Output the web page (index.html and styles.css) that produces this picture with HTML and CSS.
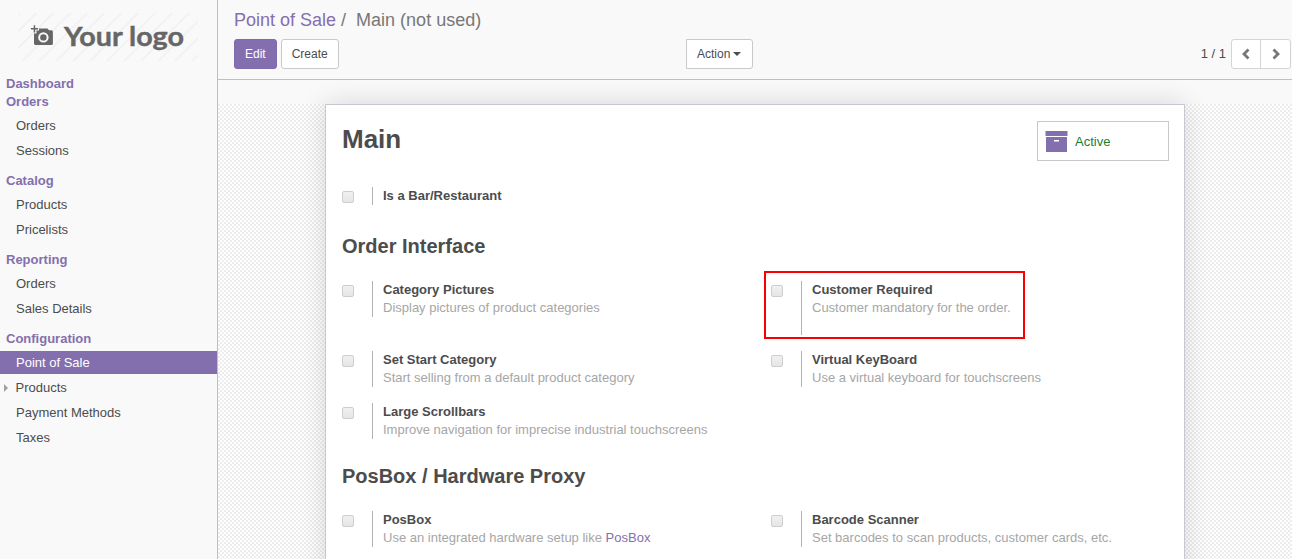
FILE: index.html
```html
<!DOCTYPE html>
<html lang="en">
<head>
<meta charset="utf-8">
<title>Point of Sale</title>
<link rel="stylesheet" href="styles.css">
</head>
<body>
<div class="app">
  <aside class="sidebar">
    <svg class="logo" width="180" height="48" viewBox="0 0 180 48">
      <defs>
        <pattern id="stripes" width="12" height="12" patternUnits="userSpaceOnUse" patternTransform="rotate(45)">
          <rect width="2" height="12" fill="#f2f2f2"/>
        </pattern>
      </defs>
      <rect width="180" height="48" fill="url(#stripes)"/>
      <g fill="#666">
        <path d="M15.700 12.300h1.500v2.800h2.800v1.500h-2.800v2.800h-1.500v-2.800h-2.800v-1.500h2.800z"/>
        <path d="M21 17.500V15.500h8.500l1.500 1.800h2.400a1.500 1.500 0 0 1 1.500 1.500V30.500a1.500 1.500 0 0 1-1.500 1.500h-16A1.500 1.500 0 0 1 16 30.500V20.600h2.500v-3.100z"/>
        <circle cx="25.400" cy="24.400" r="5.200" fill="#f9f9f9"/>
        <circle cx="25.400" cy="24.400" r="3.200"/>
      </g>
      <text class="logo-text" x="46" y="33" textLength="120" lengthAdjust="spacingAndGlyphs">Your logo</text>
    </svg>
    <nav class="menu">
      <div class="menu-title">Dashboard</div>
      <div class="menu-title">Orders</div>
      <ul class="menu-list"><li>Orders</li><li>Sessions</li></ul>
      <div class="menu-title">Catalog</div>
      <ul class="menu-list"><li>Products</li><li>Pricelists</li></ul>
      <div class="menu-title">Reporting</div>
      <ul class="menu-list"><li>Orders</li><li>Sales Details</li></ul>
      <div class="menu-title">Configuration</div>
      <ul class="menu-list"><li class="selected">Point of Sale</li><li class="expandable">Products</li><li>Payment Methods</li><li>Taxes</li></ul>
    </nav>
  </aside>
  <div class="main">
    <header class="control-panel">
      <div class="breadcrumb"><a>Point of Sale</a><span class="slash">/</span><span>Main (not used)</span></div>
      <div class="toolbar">
        <div class="buttons"><button class="btn primary">Edit</button><button class="btn">Create</button></div>
        <button class="btn action">Action<i class="caret"></i></button>
        <div class="pager">
          <span>1 / 1</span>
          <div class="pager-buttons">
            <button><svg width="10" height="12" viewBox="0 0 10 12"><path d="M7.500 1.500L3 6l4.500 4.500"/></svg></button>
            <button><svg width="10" height="12" viewBox="0 0 10 12"><path d="M2.500 1.500L7 6l-4.500 4.500"/></svg></button>
          </div>
        </div>
      </div>
    </header>
    <div class="content">
      <div class="backdrop">
        <section class="sheet">
          <div class="sheet-head">
            <h1>Main</h1>
            <div class="stat">
              <svg width="23" height="21" viewBox="0 0 23 21"><path fill="#846fae" fill-rule="evenodd" d="M.5 0h22v5H.5zM1 6h21v15H1zM9 9v1.500h5V9z"/></svg>
              <span>Active</span>
            </div>
          </div>
          <div class="settings">
            <div class="setting"><i class="check"></i><div class="info"><b>Is a Bar/Restaurant</b></div></div>
          </div>
          <h2>Order Interface</h2>
          <div class="settings">
            <div class="setting"><i class="check"></i><div class="info"><b>Category Pictures</b><p>Display pictures of product categories</p></div></div>
            <div class="setting highlighted"><i class="check"></i><div class="info tall"><b>Customer Required</b><p>Customer mandatory for the order.</p></div></div>
            <div class="setting"><i class="check"></i><div class="info"><b>Set Start Category</b><p>Start selling from a default product category</p></div></div>
            <div class="setting"><i class="check"></i><div class="info"><b>Virtual KeyBoard</b><p>Use a virtual keyboard for touchscreens</p></div></div>
            <div class="setting"><i class="check"></i><div class="info"><b>Large Scrollbars</b><p>Improve navigation for imprecise industrial touchscreens</p></div></div>
          </div>
          <h2 class="compact">PosBox / Hardware Proxy</h2>
          <div class="settings">
            <div class="setting"><i class="check"></i><div class="info"><b>PosBox</b><p>Use an integrated hardware setup like <a>PosBox</a></p></div></div>
            <div class="setting"><i class="check"></i><div class="info"><b>Barcode Scanner</b><p>Set barcodes to scan products, customer cards, etc.</p></div></div>
          </div>
        </section>
      </div>
    </div>
  </div>
</div>
</body>
</html>
```
FILE: styles.css
```css
*, *::before, *::after { box-sizing: border-box; }
body { margin: 0; background: #f9f9f9; color: #4c4c4c; font: 13px/18px "Liberation Sans", Arial, sans-serif; }
h1, h2, p, ul { margin: 0; padding: 0; }
a { color: #846fae; }
.app { display: flex; height: 559px; overflow: hidden; }
.sidebar { width: 218px; flex: none; border-right: 1px solid #bfbfbf; padding-top: 13px; }
.logo { display: block; margin-left: 18px; }
.logo-text { font: 700 26px Lato, sans-serif; fill: #666; stroke: #666; stroke-width: .4px; }
.menu { padding-top: 14px; }
.menu-title { padding-left: 6px; font-weight: bold; color: #846fae; }
.menu-list { list-style: none; margin: 3px 0 10px; display: flex; flex-direction: column; gap: 2px; }
.menu-list li { height: 23px; line-height: 23px; padding-left: 16px; }
.menu-list .selected { background: #846fae; color: #fff; }
.menu-list .expandable { display: flex; align-items: center; padding-left: 4px; }
.expandable::before { content: ""; margin-right: 7.5px; border: solid transparent; border-width: 4px 0 4px 4px; border-left-color: #a0a0a0; }

.main { flex: 1; display: flex; flex-direction: column; min-width: 0; }
.control-panel { height: 80px; flex: none; border-bottom: 1px solid #bfbfbf; padding: 10px 1px 0 16px; }
.breadcrumb { height: 29px; font-size: 18px; line-height: 21px; color: #777; }
.slash { margin: 0 10px 0 5px; }
.toolbar { display: grid; grid-template-columns: 452px 1fr auto; align-items: start; }
.buttons { display: flex; gap: 4px; }
.btn { height: 30px; padding: 0 10px; border: 1px solid #c9c9c9; border-radius: 3px; background: #fff; color: #4c4c4c; font: 12px/18px "Liberation Sans", Arial, sans-serif; white-space: nowrap; }
.btn.primary { background: #846fae; border-color: #7c6bad; color: #fff; }
.action { justify-self: start; padding-right: 11px; border-radius: 0 3px 3px 0; display: flex; align-items: center; }
.caret { margin-left: 3px; border: solid transparent; border-width: 4px 4px 0; border-top-color: #4c4c4c; }
.pager { display: flex; align-items: center; gap: 5px; }
.pager-buttons { display: flex; border: 1px solid #d5d5d5; border-radius: 3px; background: #fff; }
.pager-buttons button { width: 28px; height: 28px; padding: 0; border: 0; background: none; display: flex; align-items: center; justify-content: center; }
.pager-buttons button + button { width: 30px; border-left: 1px solid #d5d5d5; }
.pager-buttons path { fill: none; stroke: #777; stroke-width: 2.8; }

.content { flex: 1; padding-top: 24px; overflow: hidden; }
.backdrop { background: repeating-conic-gradient(#fff 0 25%, #ededed 0 50%) 0 0 / 4px 4px; padding: 0 107px; }
.sheet { height: 700px; background: #fff; border: 1px solid #c8c8d3; box-shadow: 0 0 26px rgba(0,0,0,.14); padding: 16px 15px 0 16px; }
.sheet-head { display: flex; justify-content: space-between; height: 66px; }
h1 { font-size: 26px; line-height: 36px; }
.stat { width: 132px; height: 40px; border: 1px solid #c9c9c9; display: flex; align-items: center; padding-left: 7px; gap: 7px; color: #198030; }
.stat span { padding-top: 2px; }
.settings { display: grid; grid-template-columns: 429px 1fr; row-gap: 16px; align-items: start; }
.setting { display: flex; position: relative; }
.check { width: 12px; height: 12px; margin: 4px 18px 0 0; border: 1px solid #cecece; border-radius: 2px; background: linear-gradient(#f0f0f0, #e6e6e6); }
.info { border-left: 1px solid #b3b3b3; padding-left: 10px; }
.info b { display: block; }
.info p { color: #a6a6a6; white-space: nowrap; }
.tall { height: 54px; }
.highlighted::after { content: ""; position: absolute; left: -7px; top: -10px; width: 261px; height: 68px; border: 2px solid #f80000; }
h2 { font-size: 20px; line-height: 24px; padding: 29px 0 23px; }
h2.compact { padding-top: 25px; }
```
